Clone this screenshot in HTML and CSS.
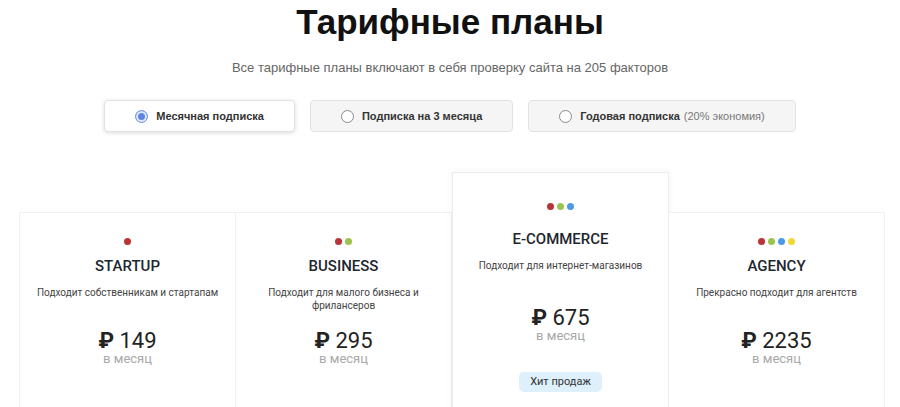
FILE: index.html
```html
<!DOCTYPE html>
<html lang="ru">

<head>
    <meta charset="UTF-8">
    <meta name="viewport" content="width=device-width, initial-scale=1.0">
    <title>Тарифные планы</title>
    <link rel="stylesheet" href="styles.css">
</head>

<body>
    <div class="pricing">

        <!-- ----------- header ---------------- -->

        <h1 class="title">Тарифные планы</h1>
        <p class="subtitle">Все тарифные планы включают в себя проверку сайта на 205 факторов</p>

        <div class="periods">
            <label class="period active">
                <span class="radio"></span>
                <b>Месячная подписка</b>
            </label>
            <label class="period">
                <span class="radio"></span>
                <b>Подписка на 3 месяца</b>
            </label>
            <label class="period">
                <span class="radio"></span>
                <b>Годовая подписка</b> <span class="save">(20% экономия)</span>
            </label>
        </div>

        <!-- ----------- plans ---------------- -->

        <div class="plans">

            <div class="plan">
                <div class="dots">
                    <i class="red"></i>
                </div>
                <h3>STARTUP</h3>
                <p class="desc">Подходит собственникам и стартапам</p>
                <div class="price"><span class="rub">₽</span> 149</div>
                <div class="per">в месяц</div>
            </div>

            <div class="plan">
                <div class="dots">
                    <i class="red"></i><i class="green"></i>
                </div>
                <h3>BUSINESS</h3>
                <p class="desc">Подходит для малого бизнеса и фрилансеров</p>
                <div class="price"><span class="rub">₽</span> 295</div>
                <div class="per">в месяц</div>
            </div>

            <div class="plan featured">
                <div class="dots">
                    <i class="red"></i><i class="green"></i><i class="blue"></i>
                </div>
                <h3>E-COMMERCE</h3>
                <p class="desc">Подходит для интернет-магазинов</p>
                <div class="price"><span class="rub">₽</span> 675</div>
                <div class="per">в месяц</div>
                <span class="badge">Хит продаж</span>
            </div>

            <div class="plan">
                <div class="dots">
                    <i class="red"></i><i class="green"></i><i class="blue"></i><i class="yellow"></i>
                </div>
                <h3>AGENCY</h3>
                <p class="desc">Прекрасно подходит для агентств</p>
                <div class="price"><span class="rub">₽</span> 2235</div>
                <div class="per">в месяц</div>
            </div>

        </div>

    </div>
</body>

</html>
```

FILE: styles.css
```css
* {
    box-sizing: border-box;
    padding: 0;
    margin: 0;
}

body {
    background: #fff;
    font-family: "Liberation Sans", Arial, sans-serif;
    color: #222;
}

.pricing {
    text-align: center;
}

.title {
    font-size: 35px;
    line-height: 44px;
    font-weight: bold;
    color: #111;
}

.subtitle {
    margin-top: 16px;
    font-size: 13px;
    line-height: 16px;
    color: #666;
}

/* ----------- period switch ---------------- */

.periods {
    display: flex;
    justify-content: center;
    gap: 15px;
    margin-top: 24px;
}

.period {
    display: flex;
    align-items: center;
    gap: 8px;
    height: 32px;
    padding: 0 30px;
    border: 1px solid #e2e2e2;
    border-radius: 4px;
    background: #f5f5f5;
    font-size: 11px;
    color: #333;
    cursor: pointer;
}

.period.active {
    background: #fff;
    box-shadow: 0 1px 4px rgba(0, 0, 0, 0.14);
}

.period .save {
    font-weight: normal;
    color: #777;
    margin-left: -4px;
}

.radio {
    width: 13px;
    height: 13px;
    border-radius: 50%;
    border: 1.5px solid #8a8a8a;
    background: #fff;
}

.active .radio {
    border-color: #7c9be0;
    background: #5f86e0;
    box-shadow: inset 0 0 0 2px #e3ebfb;
}

/* ----------- plans ---------------- */

.plans {
    display: flex;
    align-items: flex-start;
    margin: 40px 15px 0 19px;
    font-family: Roboto, "Liberation Sans", sans-serif;
}

.plan {
    flex: 1;
    min-height: 230px;
    margin-top: 40px;
    padding-top: 25px;
    border: 1px solid #f0f0f0;
    background: #fff;
}

.plan + .plan {
    border-left: none;
}

.plan.featured {
    margin-top: 0;
    min-height: 260px;
    padding-top: 30px;
    border: 1px solid #ececec;
    box-shadow: 0 0 8px rgba(0, 0, 0, 0.05);
}

.dots {
    display: flex;
    justify-content: center;
    gap: 3px;
    height: 7px;
}

.dots i {
    width: 7px;
    height: 7px;
    border-radius: 50%;
}

.dots .red { background: #b93434; }
.dots .green { background: #9cc34c; }
.dots .blue { background: #4c9ae6; }
.dots .yellow { background: #f2d638; }

.plan h3 {
    margin-top: 11px;
    font-size: 15px;
    line-height: 20px;
    font-weight: 500;
    color: #1e2630;
}

.featured h3 {
    margin-top: 19px;
}

.desc {
    margin: 10px auto 0;
    max-width: 192px;
    min-height: 26px;
    font-size: 10px;
    line-height: 13px;
    color: #444;
}

.price {
    margin-top: 18px;
    font-size: 22px;
    line-height: 22px;
    color: #222;
}

.price .rub {
    font-weight: 700;
}

.featured .price {
    margin-top: 22px;
}

.per {
    font-size: 13px;
    line-height: 14px;
    color: #a8a8a8;
}

.badge {
    display: inline-block;
    margin-top: 29px;
    padding: 0 11px;
    height: 20px;
    line-height: 20px;
    border-radius: 5px;
    background: #ddf0fb;
    font-size: 11px;
    color: #333;
}
```
